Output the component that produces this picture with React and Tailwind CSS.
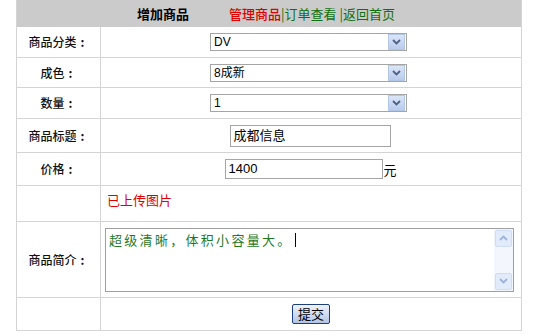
import React from 'react'

const font = { fontFamily: '"Liberation Sans", "Noto Sans CJK SC", sans-serif' }
const cjk = { fontFamily: '"Noto Sans CJK SC", "Liberation Sans", sans-serif' }

function Chevron({ up = false, color = '#4d6185' }) {
  return (
    <svg width="9" height="6" viewBox="0 0 9 6">
      <path
        d={up ? 'M1 5 L4.5 1.5 L8 5' : 'M1 1 L4.5 4.5 L8 1'}
        fill="none"
        stroke={color}
        strokeWidth="1.8"
      />
    </svg>
  )
}

function Select({ value }) {
  return (
    <div className="flex h-[18px] w-[197px] items-center border border-[#a5a5a5] bg-white">
      <span className="flex-1 pl-[3px] text-[12px] leading-none text-black">{value}</span>
      <div className="mr-px flex h-[16px] w-[17px] items-center justify-center border border-[#b4c6e6] bg-gradient-to-b from-[#dbe6f8] to-[#b9cbec]">
        <Chevron />
      </div>
    </div>
  )
}

function Row({ label, height, children, className = '' }) {
  return (
    <div className={`flex border-b border-[#d4d4d4] ${height}`}>
      <div
        className="flex w-[84px] shrink-0 items-center justify-center border-r border-[#d4d4d4] text-[12px] font-medium text-[#111]"
        style={cjk}
      >
        {label ? (
          <>
            {label}
            <span className="inline-block w-[12px] text-center font-bold">:</span>
          </>
        ) : null}
      </div>
      <div className={`flex flex-1 ${className}`}>{children}</div>
    </div>
  )
}

export default function App() {
  return (
    <div className="h-[336px] w-[535px] bg-white" style={font}>
      <div className="ml-4 w-[506px] border-x border-[#d4d4d4]">
        <div className="flex h-[27px] items-center bg-[#cbcbcb] pl-[120px] text-[13px]" style={cjk}>
          <span className="font-bold text-black">增加商品</span>
          <span className="ml-[40px] font-medium text-[#e00000]">管理商品</span>
          <span className="text-[#107010]">|订单查看 |返回首页</span>
        </div>
        <Row label="商品分类" height="h-[31px]" className="items-center justify-center pr-[5px]">
          <Select value="DV" />
        </Row>
        <Row label="成色" height="h-[30px]" className="items-center justify-center pr-[5px]">
          <Select value="8成新" />
        </Row>
        <Row label="数量" height="h-[31px]" className="items-center justify-center pr-[5px]">
          <Select value="1" />
        </Row>
        <Row label="商品标题" height="h-[34px]" className="items-center justify-center pr-[2px]">
          <div className="flex h-[22px] w-[161px] items-center border border-[#a5a5a5] bg-white pl-[3px] text-[13px] text-black">
            成都信息
          </div>
        </Row>
        <Row label="价格" height="h-[33px]" className="items-center justify-center">
          <div className="flex h-[20px] w-[158px] items-center border border-[#a5a5a5] bg-white pl-[2px] text-[13px] text-black">
            1400
          </div>
          <span className="self-end pb-[5px] text-[13px] text-black">元</span>
        </Row>
        <Row label="" height="h-[36px]" className="pl-[6px] pt-[8px]">
          <span className="text-[13px] leading-none text-[#e00000]">已上传图片</span>
        </Row>
        <Row label="商品简介" height="h-[76px]" className="items-center pl-[4px]">
          <div className="flex h-[64px] w-[409px] border border-[#a0a0a0] bg-white">
            <div className="flex flex-1 items-start pl-[3px] pt-[3px]">
              <span className="text-[13px] leading-[15px] tracking-[2.3px] text-[#1f7a1f]" style={cjk}>
                超级清晰，体积小容量大。
              </span>
              <span className="ml-[2px] mt-[1px] h-[14px] w-px bg-black" />
            </div>
            <div className="flex w-[19px] flex-col justify-between bg-[#f3f6fc] p-px">
              <div className="flex h-[17px] items-center justify-center rounded-[2px] border border-[#cfdcf3] bg-[#e2ebfa]">
                <Chevron up color="#9fb4da" />
              </div>
              <div className="flex h-[17px] items-center justify-center rounded-[2px] border border-[#cfdcf3] bg-[#e2ebfa]">
                <Chevron color="#9fb4da" />
              </div>
            </div>
          </div>
        </Row>
        <Row label="" height="h-[33px]" className="items-center justify-center">
          <button className="flex h-[20px] w-[38px] items-center justify-center rounded-[2px] border border-[#1d3f80] bg-gradient-to-b from-[#eef3fb] to-[#b3c5e6] text-[13px] leading-none text-black">
            提交
          </button>
        </Row>
      </div>
    </div>
  )
}
